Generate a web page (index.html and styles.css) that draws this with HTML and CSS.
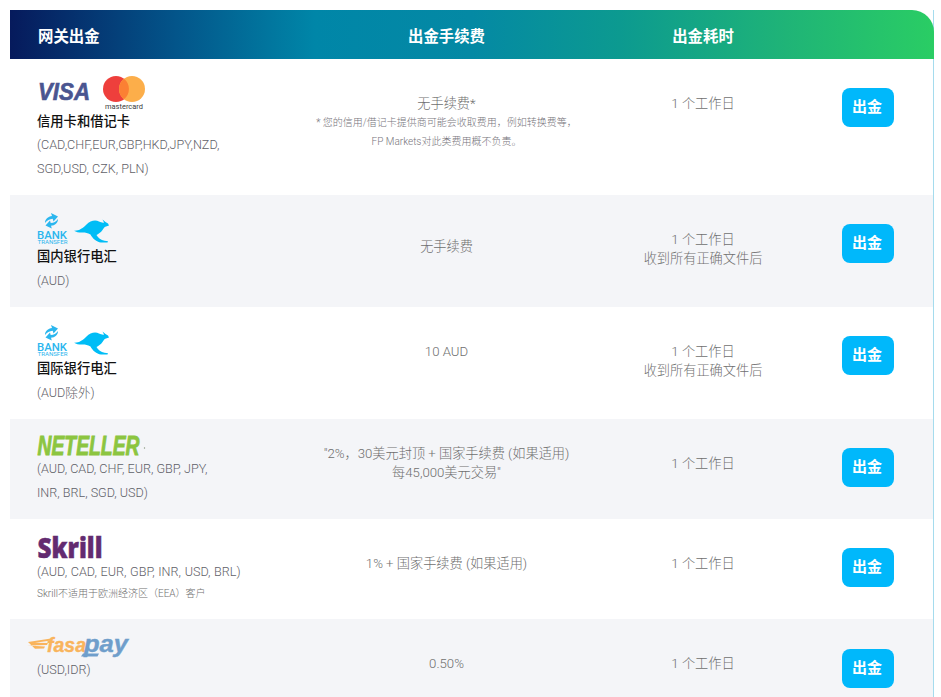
FILE: index.html
```html
<!DOCTYPE html>
<html lang="zh-CN">
<head>
<meta charset="utf-8">
<title>网关出金</title>
<link rel="stylesheet" href="styles.css">
</head>
<body>
<svg class="defs" width="0" height="0" aria-hidden="true">
  <defs>
    <symbol id="bank" viewBox="0 0 74 32" overflow="visible">
      <path d="M8 11 C8 7 11 4.5 15 4 L14 1 L21 4.5 L16.5 9.5 L15.7 6.8 C12.5 7 10 8.5 8 11Z" fill="#2bb6ee"/>
      <path d="M21 7 C21 11 18 13.5 14 13.8 L14.8 16.5 L8.5 13.5 L13 8.5 L13.7 11 C17 11 19 9.5 21 7Z" fill="#2bb6ee"/>
      <text x="0" y="26.5" class="bank-word" textLength="30" lengthAdjust="spacingAndGlyphs">BANK</text>
      <text x="0.5" y="31.5" class="bank-sub" textLength="30" lengthAdjust="spacingAndGlyphs">TRANSFER</text>
      <path d="M37 18.7 C42 19 46 16 49.5 12.5 C53 9 58 7.5 62 9.5 C64 10.5 66 11 67 10.5 L65.5 7.5 L68.5 10 L71 11.5 L72 13.5 L69 14.5 C67 15 66.5 16.5 65.5 18 C64 20.5 61 22 59.5 23 C61 26 64 28 67.5 28.8 L71 29.2 L70.5 30.5 L64 30.5 C59.5 30 55.5 26.5 53.5 22.5 C50.5 21 48.5 20.5 46 20.5 C42.5 20.7 39.5 20.2 37 18.7Z" fill="#00bdf6"/>
    </symbol>
  </defs>
</svg>
<main class="gateway">
  <div class="row head">
    <div class="head-cell head-first">网关出金</div>
    <div class="head-cell">出金手续费</div>
    <div class="head-cell">出金耗时</div>
    <div></div>
  </div>

  <div class="row row-first">
    <div class="method">
      <svg class="logo logo-cards" viewBox="0 0 110 33" role="img" aria-label="Visa Mastercard">
        <text x="1" y="23.5" class="visa" textLength="52" lengthAdjust="spacingAndGlyphs">VISA</text>
        <circle cx="79" cy="13" r="13" fill="#ee3f3c"/>
        <circle cx="95" cy="13" r="13" fill="#fcae4a"/>
        <path d="M87 2.8 a13 13 0 0 1 0 20.4 a13 13 0 0 1 0 -20.4Z" fill="#fb8033"/>
        <text x="68" y="32.5" class="mc" textLength="38" lengthAdjust="spacingAndGlyphs">mastercard</text>
      </svg>
      <div class="name">信用卡和借记卡</div>
      <div class="cur">(CAD,CHF,EUR,GBP,HKD,JPY,NZD,<br>SGD,USD, CZK, PLN)</div>
    </div>
    <div class="mid">无手续费*
      <div class="note">* 您的信用/借记卡提供商可能会收取费用，例如转换费等，<br>FP Markets对此类费用概不负责。</div>
    </div>
    <div class="mid">1 个工作日</div>
    <div class="act"><button class="btn" type="button">出金</button></div>
  </div>

  <div class="row alt">
    <div class="method">
      <svg class="logo logo-bank"><use href="#bank"/></svg>
      <div class="name">国内银行电汇</div>
      <div class="cur">(AUD)</div>
    </div>
    <div class="mid mid-low">无手续费</div>
    <div class="mid">1 个工作日<br>收到所有正确文件后</div>
    <div class="act"><button class="btn" type="button">出金</button></div>
  </div>

  <div class="row">
    <div class="method">
      <svg class="logo logo-bank"><use href="#bank"/></svg>
      <div class="name">国际银行电汇</div>
      <div class="cur">(AUD除外)</div>
    </div>
    <div class="mid">10 AUD</div>
    <div class="mid">1 个工作日<br>收到所有正确文件后</div>
    <div class="act"><button class="btn" type="button">出金</button></div>
  </div>

  <div class="row alt">
    <div class="method">
      <svg class="logo logo-neteller" viewBox="0 0 110 20" role="img" aria-label="Neteller">
        <text x="0.5" y="19" class="neteller" textLength="102" lengthAdjust="spacingAndGlyphs">NETELLER</text>
        <circle cx="107.5" cy="12" r="0.7" fill="#8a9a80"/>
      </svg>
      <div class="cur">(AUD, CAD, CHF, EUR, GBP, JPY,<br>INR, BRL, SGD, USD)</div>
    </div>
    <div class="mid mid-high">"2%，30美元封顶 + 国家手续费 (如果适用)<br>每45,000美元交易"</div>
    <div class="mid">1 个工作日</div>
    <div class="act"><button class="btn" type="button">出金</button></div>
  </div>

  <div class="row">
    <div class="method">
      <svg class="logo logo-skrill" viewBox="0 0 70 23" role="img" aria-label="Skrill">
        <text x="0.5" y="21.5" class="skrill" textLength="65" lengthAdjust="spacingAndGlyphs">Skrill</text>
      </svg>
      <div class="cur cur-wide">(AUD, CAD, EUR, GBP, INR, USD, BRL)</div>
      <div class="small">Skrill不适用于欧洲经济区（EEA）客户</div>
    </div>
    <div class="mid">1% + 国家手续费 (如果适用)</div>
    <div class="mid">1 个工作日</div>
    <div class="act"><button class="btn" type="button">出金</button></div>
  </div>

  <div class="row alt row-last">
    <div class="method">
      <svg class="logo logo-fasapay" viewBox="0 0 110 21" role="img" aria-label="Fasapay">
        <path d="M1 6 L24 2.5 L24 4.5 L8 6.8 L21 7 L20 9 L0 9.5 L18 10.5 L17 12.5 L8 12.8 Z" fill="#f9b45c"/>
        <text x="20" y="16" class="fasa" textLength="39" lengthAdjust="spacingAndGlyphs">fasa</text>
        <text x="57" y="16" class="pay" textLength="44" lengthAdjust="spacingAndGlyphs">pay</text>
        <path d="M56 17.5 L72 17.5 L70.5 20.5 L54 20.5Z" fill="#6f9ecb"/>
      </svg>
      <div class="cur">(USD,IDR)</div>
    </div>
    <div class="mid">0.50%</div>
    <div class="mid">1 个工作日</div>
    <div class="act act-low"><button class="btn" type="button">出金</button></div>
  </div>
</main>
</body>
</html>
```

FILE: styles.css
```css
html, body { margin: 0; padding: 0; background: #fff; }
body {
  padding: 10px 7px 0 10px;
  font-family: Roboto, "Noto Sans CJK SC", sans-serif;
  color: #6f6f6f;
  overflow: hidden;
}
.defs { position: absolute; }
.gateway {
  width: 923px;
  border-right: 1px solid #a5dcee;
}
.row {
  display: grid;
  grid-template-columns: 308px 257px 256px 1fr;
  background: #fff;
}
.alt { background: #f4f5f8; }
.row-first .method { padding-bottom: 14px; }
.row-first .cur { padding-top: 0; margin-bottom: 0; }
.row-last { min-height: 78px; }
.head {
  height: 49px;
  margin-right: -1px;
  align-items: center;
  border-top-right-radius: 22px;
  background: linear-gradient(90deg, #061a5c 0%, #03558a 18%, #0086a8 33%, #0489a4 50%, #0c9a90 66%, #1fb477 84%, #2acd64 100%);
}
.head-cell {
  font-weight: 700;
  color: #fff;
  text-align: center;
  font-size: 15.4px;
  font-family: "Noto Sans CJK SC", sans-serif;
}
.head-first { text-align: left; padding-left: 28px; }
.method { padding: 17px 0 15px 27px; }
.logo { display: block; overflow: visible; }
.logo-cards { width: 110px; height: 33px; }
.logo-bank { width: 74px; height: 32px; }
.logo-neteller { width: 110px; height: 20px; }
.logo-skrill { width: 70px; height: 23px; }
.logo-fasapay { width: 110px; height: 21px; margin-left: -10px; }
.name {
  font-size: 13.3px;
  line-height: 24px;
  font-weight: 500;
  color: #111;
  font-family: "Noto Sans CJK SC", sans-serif;
}
.cur {
  padding-top: 1px;
  margin-bottom: -1px;
  font-size: 12.6px;
  line-height: 24px;
  font-weight: 300;
  color: #5f6168;
}
.cur-wide { word-spacing: 0.6px; }
.small {
  font-size: 10px;
  line-height: 21px;
  font-weight: 300;
  color: #6f6f6f;
}
.mid {
  padding-top: 35px;
  font-size: 13.2px;
  line-height: 19px;
  font-weight: 300;
  text-align: center;
  color: #6f6f6f;
}
.mid-low { padding-top: 42px; }
.mid-high { padding-top: 25px; }
.note {
  margin: 0 -6px;
  font-size: 10px;
  line-height: 19px;
  color: #77757c;
}
.act { padding: 29px 0 0 11px; }
.act-low { padding-top: 30px; }
.btn {
  display: block;
  width: 52px;
  height: 39px;
  padding: 0 2px 4px 0;
  border: 0;
  border-radius: 8px;
  background: #00b8fb;
  color: #fff;
  font-size: 15px;
  font-weight: 700;
  font-family: "Noto Sans CJK SC", sans-serif;
}
.visa { font: italic 700 23px "Liberation Sans", sans-serif; fill: #4a5590; stroke: #4a5590; stroke-width: 0.6px; }
.mc { font: 400 7.5px Roboto, sans-serif; fill: #3a3a3a; }
.bank-word { font: 500 11px Roboto, sans-serif; fill: #2bb6ee; }
.bank-sub { font: 400 5px Roboto, sans-serif; fill: #2bb6ee; }
.neteller { font: italic 700 27px "Liberation Sans", sans-serif; fill: #8cc540; stroke: #8cc540; stroke-width: 0.9px; }
.skrill { font: 800 28px "Open Sans", sans-serif; fill: #632b70; stroke: #632b70; stroke-width: 0.5px; }
.fasa { font: italic 700 20px "Liberation Sans", sans-serif; fill: #f9b45c; stroke: #f9b45c; stroke-width: 0.4px; }
.pay { font: italic 700 24px "Liberation Sans", sans-serif; fill: #6f9ecb; stroke: #6f9ecb; stroke-width: 0.4px; }
```
